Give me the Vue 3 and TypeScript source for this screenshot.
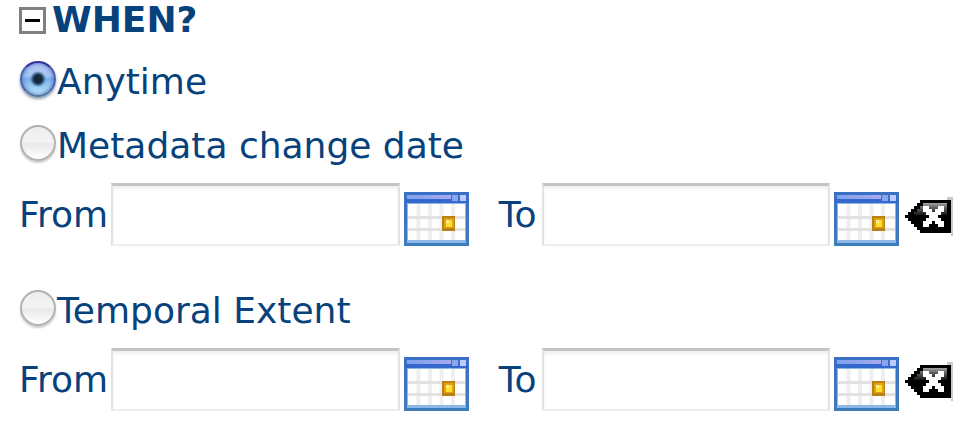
<script setup lang="ts">
import { reactive, ref } from 'vue'

type Mode = 'anytime' | 'metadata' | 'temporal'
interface DateRange { from: string; to: string }

const open = ref(true)
const mode = ref<Mode>('anytime')
const groups = reactive<{ id: Mode; label: string; range: DateRange }[]>([
  { id: 'metadata', label: 'Metadata change date', range: { from: '', to: '' } },
  { id: 'temporal', label: 'Temporal Extent', range: { from: '', to: '' } },
])
const ends: { key: keyof DateRange; label: string }[] = [
  { key: 'from', label: 'From' },
  { key: 'to', label: 'To' },
]

function clear(range: DateRange) {
  range.from = ''
  range.to = ''
}
</script>

<template>
  <main class="when">
    <svg class="defs" aria-hidden="true">
      <defs>
        <linearGradient id="cal-frame" x1="0" y1="0" x2="0" y2="1">
          <stop offset="0" stop-color="#3b6fc4" />
          <stop offset="1" stop-color="#3e7dbb" />
        </linearGradient>
        <linearGradient id="cal-title" x1="0" y1="0" x2="1" y2="0">
          <stop offset="0" stop-color="#7da2ee" />
          <stop offset="1" stop-color="#a9a8f0" />
        </linearGradient>
        <linearGradient id="clear-shine" x1="0" y1="0" x2="0" y2="1">
          <stop offset="0" stop-color="#a4a4a4" />
          <stop offset="0.4" stop-color="#606060" />
          <stop offset="1" stop-color="#161616" />
        </linearGradient>
      </defs>
    </svg>

    <h1 class="heading">
      <button class="toggle" type="button" :aria-expanded="open" @click="open = !open">
        <svg class="toggle-icon" viewBox="0 0 27 27" aria-hidden="true">
          <rect x="1.5" y="1.5" width="24" height="24" fill="#fff" stroke="#808080" stroke-width="3" />
          <rect x="6" y="12" width="15" height="3" fill="#000" />
          <rect v-if="!open" x="12" y="6" width="3" height="15" fill="#000" />
        </svg>
        <span>WHEN?</span>
      </button>
    </h1>

    <form v-if="open" @submit.prevent>
      <div class="choice">
        <input id="anytime" v-model="mode" class="radio" type="radio" name="when" value="anytime" />
        <label for="anytime">Anytime</label>
      </div>

      <section v-for="group in groups" :key="group.id" class="group">
        <div class="choice">
          <input :id="group.id" v-model="mode" class="radio" type="radio" name="when" :value="group.id" />
          <label :for="group.id">{{ group.label }}</label>
        </div>
        <div class="range">
          <div v-for="end in ends" :key="end.key" class="field" :class="end.key">
            <label :for="`${group.id}-${end.key}`">{{ end.label }}</label>
            <input :id="`${group.id}-${end.key}`" v-model="group.range[end.key]" class="date" type="text" />
            <button class="calendar" type="button">
              <svg viewBox="0 0 65 54" role="img">
                <rect width="65" height="54" fill="url(#cal-frame)" />
                <rect x="3" y="3" width="44" height="4" fill="url(#cal-title)" />
                <rect x="1" y="7" width="63" height="4" fill="#3468cc" />
                <rect x="48" y="3" width="6" height="6" fill="#86a6ed" />
                <rect x="56" y="3" width="6" height="6" fill="#bccbff" />
                <rect x="3" y="11" width="59" height="40" fill="#8db8e6" />
                <rect x="4" y="12" width="57" height="36" fill="#fff" />
                <path d="M14.500 12V48M26 12V48M37.500 12V48M49 12V48" stroke="#efefef" stroke-width="4" />
                <path d="M4 25.500H61M4 37.500H61" stroke="#e2e2e2" stroke-width="3" />
                <rect x="38" y="24" width="13" height="15" fill="#b98016" />
                <rect x="40" y="26" width="10" height="10" fill="#dda313" />
                <rect x="42" y="28" width="6" height="7" fill="#ffdf28" />
                <rect x="42" y="28" width="3" height="3" fill="#fff08a" />
              </svg>
            </button>
          </div>
          <button class="clear" type="button" @click="clear(group.range)">
            <svg viewBox="0 0 48 39" role="img">
              <path d="M42 0H48V39H46V3H42Z" fill="#c8c8c8" />
              <path d="M0 18H3V15H6V12H9V9H12V6H15V3H46V36H15V33H12V30H9V27H6V24H3V21H0Z" fill="#000" />
              <path d="M9 18V15H12V12H15V9H18V6H42V18Z" fill="url(#clear-shine)" />
              <path
                d="M18 9H24V12H27V15H30V12H33V9H39V15H36V18H33V21H36V24H39V30H33V27H30V24H27V27H24V30H18V24H21V21H24V18H21V15H18Z"
                fill="#fff"
              />
            </svg>
          </button>
        </div>
      </section>
    </form>
  </main>
</template>

<style>
body {
  margin: 0;
  background: #fff;
}
</style>

<style scoped>
.when {
  padding: 0 12px 20px 19px;
  color: #07427c;
  font-family: "DejaVu Sans", Verdana, sans-serif;
  font-size: 36px;
  line-height: 40px;
}

.defs {
  position: absolute;
  width: 0;
  height: 0;
}

button {
  display: block;
  padding: 0;
  border: 0;
  background: none;
  color: inherit;
  font: inherit;
  cursor: pointer;
}

svg {
  display: block;
  width: 100%;
}

.heading {
  margin: 0 0 10px;
  font-size: inherit;
  font-weight: bold;
}

.toggle {
  display: flex;
  align-items: center;
  gap: 6px;
}

.toggle-icon {
  width: 27px;
}

.choice {
  display: flex;
  align-items: center;
  height: 64px;
}

.radio {
  appearance: none;
  flex: none;
  width: 36px;
  height: 36px;
  margin: 0 1px 6px;
  border: 2px solid #b2b2b2;
  border-radius: 50%;
  background: linear-gradient(#ededed, #f3f3f3 45%, #e9e9e9 55%, #fff);
  box-shadow: 0 2px 2px #ccc;
}

.radio:checked {
  border-color: #34309a #4a62ae #56779f;
  background:
    radial-gradient(circle, #14283c 4px, #294d72 5px, transparent 8px),
    linear-gradient(#b5c8f2, #a3c5f3 40%, #79aeea 50%, #c0eaff);
  box-shadow: 0 2px 3px #8b98a8, inset 0 0 4px #3f62b0;
}

.group + .group {
  margin-top: 33px;
}

.range {
  display: flex;
  align-items: center;
  padding-top: 5px;
}

.field {
  display: flex;
  flex: 1 1 auto;
  align-items: center;
}

.field.to {
  margin-left: 30px;
}

.field label {
  margin-right: 3px;
}

.to label {
  margin-right: 5px;
}

.date {
  flex: 1 1 0;
  box-sizing: border-box;
  width: 0;
  min-width: 0;
  height: 63px;
  padding: 0 8px;
  border: 2px solid #e3e3e3;
  border-top: 3px solid #c4c4c4;
  border-bottom-color: #eee;
  background: #fff;
  box-shadow: inset 0 3px 3px #f1f1f1;
  color: inherit;
  font: inherit;
}

.calendar {
  flex: none;
  align-self: flex-end;
  width: 65px;
  margin-left: 4px;
}

.clear {
  flex: none;
  width: 48px;
  margin: 4px 0 0 6px;
}
</style>
